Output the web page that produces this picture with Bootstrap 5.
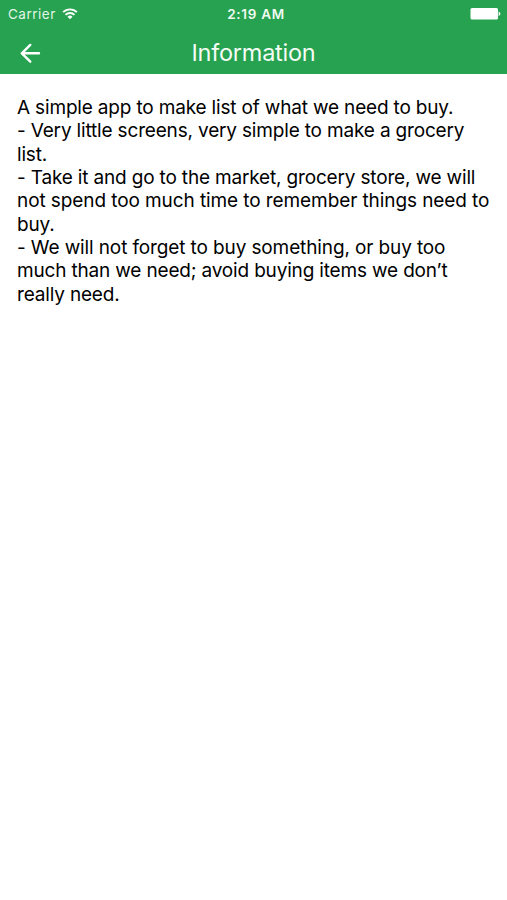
<!DOCTYPE html>
<html lang="en">
<head>
<meta charset="utf-8">
<meta name="viewport" content="width=device-width, initial-scale=1">
<title>Information</title>
<link href="https://cdn.jsdelivr.net/npm/bootstrap@5.3.0/dist/css/bootstrap.min.css" rel="stylesheet">
<style>
body { font-family: Inter, "Liberation Sans", sans-serif; background: #fff; color: #000; }
.app-top { background: #26a250; height: 74px; color: #fff; }
.status-bar { height: 27px; font-size: 13.5px; line-height: 27px; padding: 1px 6px 0 8px; }
.status-bar > div { flex: 1 1 0; }
.carrier { letter-spacing: .5px; color: #e2f5e6; }
.wifi { margin-left: 6px; }
.clock { font-weight: 600; letter-spacing: .7px; color: #effaf0; padding-left: 3px; }
.title-bar { height: 47px; padding: 5px 18px 0; }
.title-bar > div { flex: 1 1 0; }
.title-bar h1 { font-size: 23.5px; font-weight: 400; line-height: 42px; letter-spacing: -.25px; color: #f4fcf5; }
.info-text { padding: 22px 0 0 17px; font-size: 19px; line-height: 23.33px; letter-spacing: -.17px; }
.info-text span { display: block; white-space: nowrap; width: max-content; }
.info-text span:nth-child(5) { letter-spacing: -.09px; }
.info-text span:nth-child(7) { letter-spacing: -.12px; }
</style>
</head>
<body>
<header class="app-top">
  <div class="status-bar d-flex align-items-center">
    <div class="d-flex align-items-center"><span class="carrier">Carrier</span>
      <svg class="wifi" width="16" height="12" viewBox="0 0 16 12" fill="none" stroke="#fff" stroke-width="1.900"><path d="M1.100 4.200a9.800 9.800 0 0 1 13.800 0M3.500 6.900a6.400 6.400 0 0 1 9 0"/><path d="M8 11.300 5.500 8.800a3.600 3.600 0 0 1 5 0z" fill="#fff" stroke="none"/></svg>
    </div>
    <span class="clock">2:19 AM</span>
    <div class="d-flex justify-content-end"><svg width="31" height="12" viewBox="0 0 31 12" fill="#fff"><rect x=".5" width="27.500" height="11.500" rx="1.500"/><path d="M28.600 3.800c2.400.5 2.400 3.600 0 4.100z"/></svg></div>
  </div>
  <div class="title-bar d-flex align-items-center">
    <div class="d-flex"><svg width="24" height="24" viewBox="0 0 24 24" fill="none" stroke="#fff" stroke-width="2.400" stroke-linecap="round" stroke-linejoin="round"><path d="M21 12.300H3.800M12.300 3.900 3.800 12.300l8.500 8.400"/></svg></div>
    <h1 class="m-0">Information</h1>
    <div></div>
  </div>
</header>
<main class="info-text">
  <span>A simple app to make list of what we need to buy.</span>
  <span>- Very little screens, very simple to make a grocery</span>
  <span>list.</span>
  <span>- Take it and go to the market, grocery store, we will</span>
  <span>not spend too much time to remember things need to</span>
  <span>buy.</span>
  <span>- We will not forget to buy something, or buy too</span>
  <span>much than we need; avoid buying items we don’t</span>
  <span>really need.</span>
</main>
<script src="https://cdn.jsdelivr.net/npm/bootstrap@5.3.0/dist/js/bootstrap.bundle.min.js"></script>
</body>
</html>
